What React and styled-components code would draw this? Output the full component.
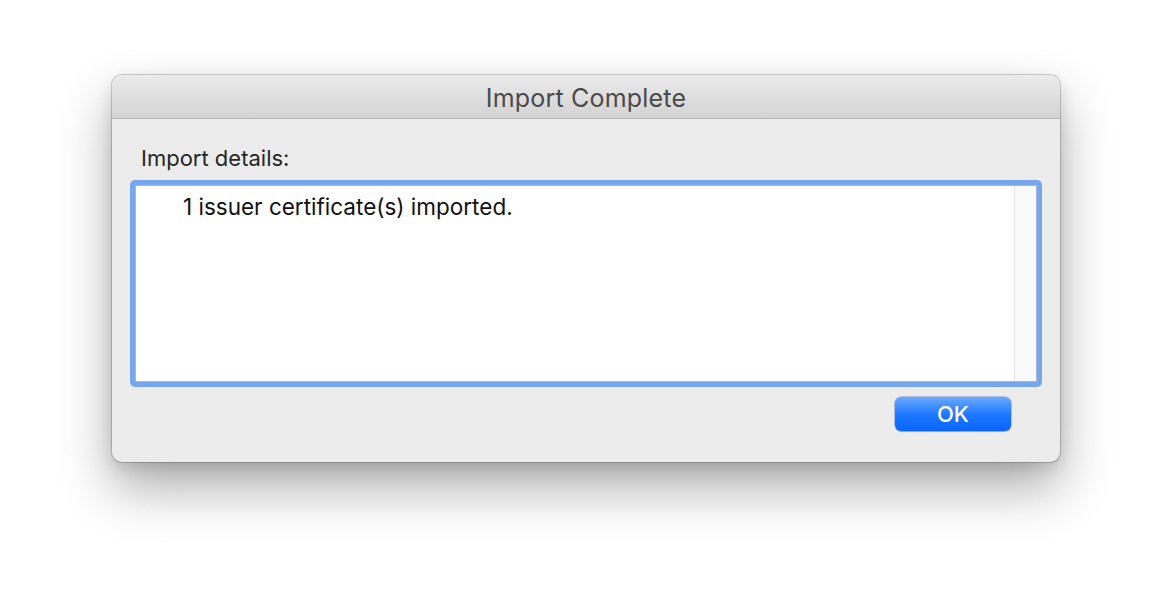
import React from 'react';
import styled, {createGlobalStyle} from 'styled-components';

const GlobalStyle = createGlobalStyle`
  html, body {
    margin: 0;
    padding: 0;
    background: #ffffff;
  }
  body {
    font-family: Inter, "Noto Sans", "Liberation Sans", sans-serif;
    -webkit-font-smoothing: antialiased;
  }
`;

const Page = styled.div`
  width: 1172px;
  height: 610px;
  display: flex;
  justify-content: center;
  align-items: flex-start;
  padding-top: 75px;
  box-sizing: border-box;
`;

const Window = styled.div`
  width: 948px;
  height: 387px;
  box-sizing: border-box;
  display: flex;
  flex-direction: column;
  background: #ececec;
  border-radius: 10px;
  overflow: hidden;
  box-shadow: 0 0 0 1px rgba(0, 0, 0, 0.18), 0 26px 52px rgba(0, 0, 0, 0.32),
    0 6px 16px rgba(0, 0, 0, 0.12);
`;

const TitleBar = styled.div`
  height: 44px;
  flex: none;
  display: flex;
  align-items: center;
  justify-content: center;
  padding-top: 3px;
  box-sizing: border-box;
  background: linear-gradient(#ebebeb, #d3d3d3);
  border-bottom: 1px solid #b5b5b5;
  color: #4a4a4a;
  font-size: 25px;
  letter-spacing: 0.2px;
`;

const Body = styled.div`
  flex: 1;
  display: flex;
  flex-direction: column;
  padding: 26px 18px 0 18px;
`;

const Label = styled.div`
  padding-left: 11px;
  font-size: 22px;
  color: #262626;
  line-height: 26px;
  height: 26px;
`;

const FocusRing = styled.div`
  margin-top: 9px;
  height: 207px;
  flex: none;
  box-sizing: border-box;
  border: 5px solid #76a7ee;
  border-radius: 5px;
  display: flex;
  background: #76a7ee;
`;

const TextArea = styled.div`
  flex: 1;
  display: flex;
  background: #ffffff;
  border: 1px solid #a8b8d0;
  border-radius: 1px;
`;

const Content = styled.div`
  flex: 1;
  padding: 8px 0 0 47px;
  font-size: 22.5px;
  color: #111111;
  line-height: 26px;
`;

const ScrollTrack = styled.div`
  width: 21px;
  background: #f9f9f9;
  border-left: 1px solid #e6e6e6;
`;

const Footer = styled.div`
  display: flex;
  justify-content: flex-end;
  padding: 10px 31px 0 0;
`;

const Button = styled.button`
  width: 116px;
  height: 34px;
  border: none;
  border-radius: 6px;
  background: linear-gradient(#6aa9ff, #1a76ff 55%, #0a66fa);
  box-shadow: 0 0 0 0.5px rgba(0, 60, 180, 0.5), 0 1px 1px rgba(0, 0, 0, 0.15);
  color: #ffffff;
  font-family: inherit;
  font-size: 22px;
  font-weight: 500;
  padding: 0;
`;

export default function App() {
  return (
    <>
      <GlobalStyle />
      <Page>
        <Window>
          <TitleBar>Import Complete</TitleBar>
          <Body>
            <Label>Import details:</Label>
            <FocusRing>
              <TextArea>
                <Content>1 issuer certificate(s) imported.</Content>
                <ScrollTrack />
              </TextArea>
            </FocusRing>
            <Footer>
              <Button>OK</Button>
            </Footer>
          </Body>
        </Window>
      </Page>
    </>
  );
}
